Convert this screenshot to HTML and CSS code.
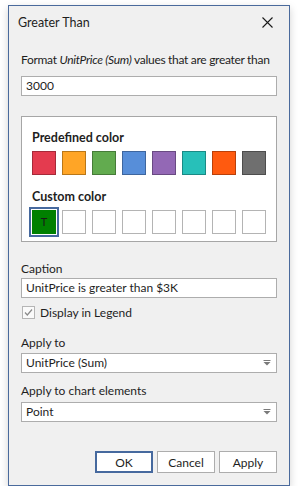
FILE: index.html
```html
<!DOCTYPE html>
<html lang="en">
<head>
  <meta charset="UTF-8" />
  <title>Greater Than</title>
  <link rel="stylesheet" href="styles.css">
</head>
<body>
  <div class="dialog">
    <div class="titlebar">
      <span class="title">Greater Than</span>
      <svg class="close" width="11" height="11" viewBox="0 0 11 11">
        <path d="M0.5 0.5 L10.5 10.5 M10.5 0.5 L0.5 10.5" stroke="#1a1a1a" stroke-width="1.1" fill="none" />
      </svg>
    </div>
    <div class="content">
      <div class="label first">Format <i>UnitPrice (Sum)</i> values that are greater than</div>
      <div class="field value">3000</div>

      <div class="colors">
        <div class="group-title">Predefined color</div>
        <div class="swatches">
          <span class="swatch red"></span>
          <span class="swatch orange"></span>
          <span class="swatch green"></span>
          <span class="swatch blue"></span>
          <span class="swatch purple"></span>
          <span class="swatch teal"></span>
          <span class="swatch tangerine"></span>
          <span class="swatch gray"></span>
        </div>
        <div class="group-title custom">Custom color</div>
        <div class="swatches">
          <span class="swatch selected">T</span>
          <span class="swatch empty"></span>
          <span class="swatch empty"></span>
          <span class="swatch empty"></span>
          <span class="swatch empty"></span>
          <span class="swatch empty"></span>
          <span class="swatch empty"></span>
          <span class="swatch empty"></span>
        </div>
      </div>

      <div class="label caption">Caption</div>
      <div class="field tight">UnitPrice is greater than $3K</div>
      <div class="check-row">
        <span class="checkbox">
          <svg width="11" height="11" viewBox="0 0 11 11">
            <path d="M2 5.5 L4.3 8 L9 2.5" stroke="#8a8a8a" stroke-width="1.2" fill="none" />
          </svg>
        </span>
        <span>Display in Legend</span>
      </div>

      <div class="label apply">Apply to</div>
      <div class="field combo tight">
        <span>UnitPrice (Sum)</span>
        <svg width="8" height="6" viewBox="0 0 8 6">
          <rect x="0.5" y="0" width="7" height="1" fill="#7a7a7a" />
          <polygon points="0.5,2 7.5,2 4,5.5" fill="#7a7a7a" />
        </svg>
      </div>

      <div class="label elements">Apply to chart elements</div>
      <div class="field combo tight">
        <span>Point</span>
        <svg width="8" height="6" viewBox="0 0 8 6">
          <rect x="0.5" y="0" width="7" height="1" fill="#7a7a7a" />
          <polygon points="0.5,2 7.5,2 4,5.5" fill="#7a7a7a" />
        </svg>
      </div>
    </div>
    <div class="buttons">
      <button class="btn default">OK</button>
      <button class="btn">Cancel</button>
      <button class="btn">Apply</button>
    </div>
  </div>
</body>
</html>
```

FILE: styles.css
```css
body {
  margin: 0;
  background: #fff;
  font-family: Lato, 'Liberation Sans', sans-serif;
  font-size: 12px;
  color: #1e1e1e;
}
.dialog {
  width: 282px;
  height: 481px;
  box-sizing: border-box;
  margin: 5px 0 0 8px;
  border: 1px solid #4a6a9c;
  background: #f0f0f0;
  box-shadow: 0 3px 8px rgba(0, 0, 0, 0.18);
  display: flex;
  flex-direction: column;
}
.titlebar {
  height: 32px;
  display: flex;
  align-items: center;
  justify-content: space-between;
  padding: 0 16px 0 9px;
}
.title {
  font-size: 12.5px;
}
.content {
  padding: 0 12px;
}
.label {
  line-height: 16px;
  height: 16px;
  white-space: nowrap;
}
.label.first {
  margin-top: 14px;
  letter-spacing: -0.3px;
}
.label i {
  font-style: italic;
}
.field {
  height: 20px;
  box-sizing: border-box;
  border: 1px solid #adadad;
  background: #fff;
  padding: 0 4px;
  line-height: 18px;
  margin-top: 8px;
}
.field.tight {
  margin-top: 1px;
}
.combo {
  display: flex;
  align-items: center;
  justify-content: space-between;
  padding-right: 5px;
}
.colors {
  margin-top: 20px;
  height: 126px;
  box-sizing: border-box;
  border: 1px solid #a6a6a6;
  background: #fff;
  padding: 13px 10px 0 10px;
}
.group-title {
  font-weight: bold;
  font-size: 12.5px;
  line-height: 16px;
  height: 16px;
}
.group-title.custom {
  margin-top: 14px;
}
.swatches {
  display: flex;
  gap: 6px;
  margin-top: 5px;
}
.swatch {
  width: 24px;
  height: 24px;
  box-sizing: border-box;
  border: 1px solid;
  display: inline-block;
}
.red { background: #e43b4f; border-color: #a52a39; }
.orange { background: #ffa526; border-color: #b97718; }
.green { background: #62ab4f; border-color: #467b38; }
.blue { background: #578ed9; border-color: #3e669e; }
.purple { background: #9368b5; border-color: #694a82; }
.teal { background: #27c0b9; border-color: #1a8a85; }
.tangerine { background: #ff5a0f; border-color: #b9400a; }
.gray { background: #6f6f6f; border-color: #4d4d4d; }
.empty { background: #fff; border-color: #b4b4b4; }
.swatch.selected {
  background: #008000;
  border-color: #008000;
  box-shadow: 0 0 0 1px #fff, 0 0 0 3px #46699e;
  color: #1a1a1a;
  font-size: 11px;
  text-align: center;
  line-height: 22px;
}
.label.caption {
  margin-top: 19px;
}
.check-row {
  display: flex;
  align-items: center;
  gap: 5px;
  margin-top: 6px;
  height: 16px;
}
.checkbox {
  width: 13px;
  height: 13px;
  box-sizing: border-box;
  border: 1px solid #b5b5b5;
  background: #fafafa;
  display: flex;
  align-items: center;
  justify-content: center;
  margin-left: 1px;
}
.label.apply {
  margin-top: 15px;
}
.label.elements {
  margin-top: 10px;
}
.apply + .field {
  margin-top: 2px;
}
.elements + .field {
  margin-top: 3px;
}
.buttons {
  margin-top: auto;
  padding: 0 12px 12px 0;
  display: flex;
  justify-content: flex-end;
  gap: 4px;
}
.btn {
  width: 58px;
  height: 22px;
  box-sizing: border-box;
  border: 1px solid #adadad;
  background: #fff;
  font-family: inherit;
  font-size: 12px;
  color: #1e1e1e;
  padding: 0;
}
.btn.default {
  border: 2px solid #46699e;
}
```
